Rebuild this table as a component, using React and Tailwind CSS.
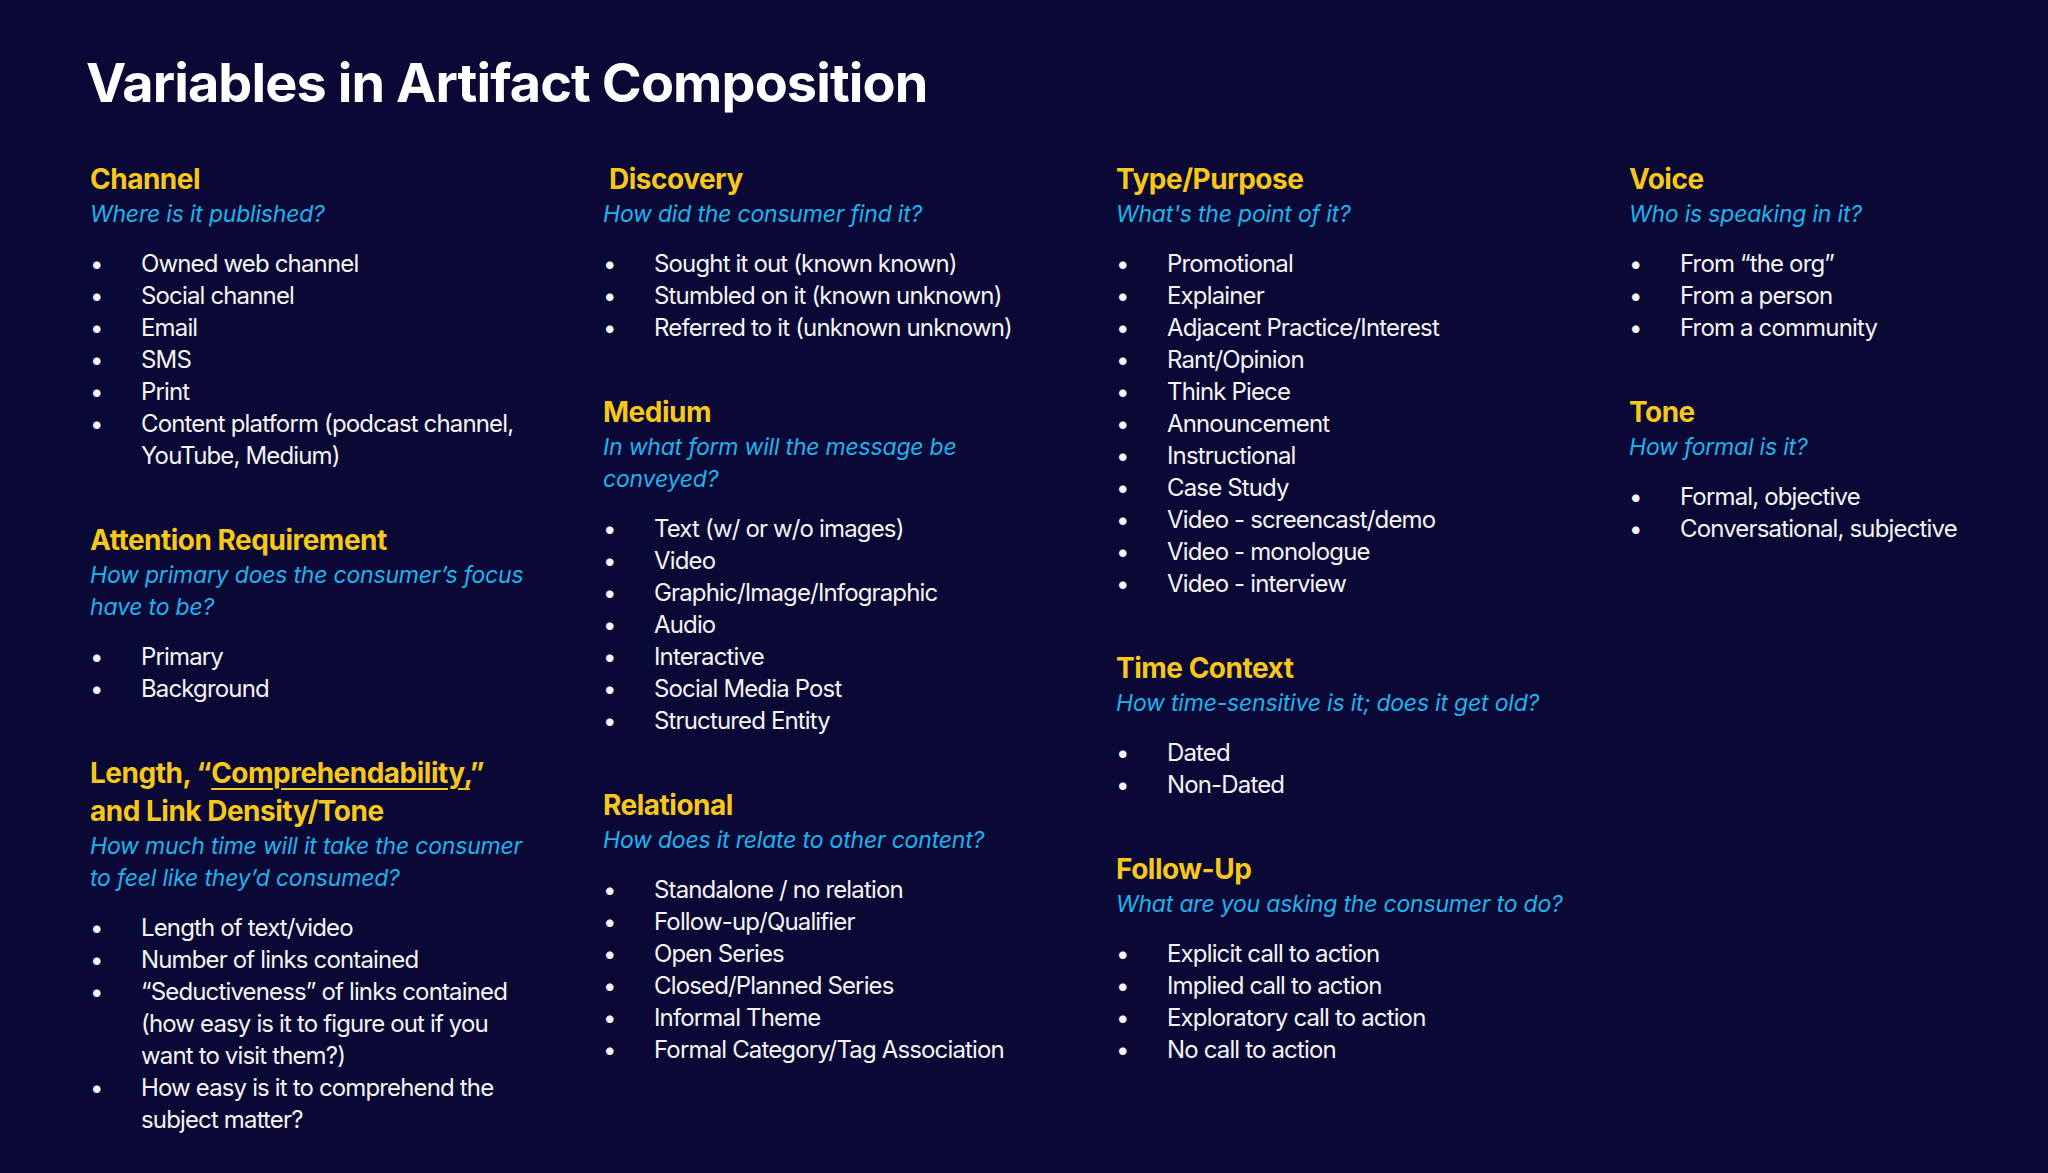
const columns = [
  {
    width: "max-w-[445px]",
    sections: [
      {
        title: "Channel",
        question: "Where is it published?",
        items: [
          "Owned web channel",
          "Social channel",
          "Email",
          "SMS",
          "Print",
          "Content platform (podcast channel, YouTube, Medium)",
        ],
      },
      {
        title: "Attention Requirement",
        question: "How primary does the consumer’s focus have to be?",
        items: ["Primary", "Background"],
      },
      {
        title: (
          <>
            Length, “
            <span className="underline decoration-[#f7c71c] decoration-2 underline-offset-[5px]">
              Comprehendability,
            </span>
            ”<br />
            and Link Density/Tone
          </>
        ),
        question: "How much time will it take the consumer to feel like they’d consumed?",
        items: [
          "Length of text/video",
          "Number of links contained",
          "“Seductiveness” of links contained (how easy is it to figure out if you want to visit them?)",
          "How easy is it to comprehend the subject matter?",
        ],
      },
    ],
  },
  {
    width: "max-w-[445px]",
    sections: [
      {
        title: "Discovery",
        indent: true,
        question: "How did the consumer find it?",
        items: [
          "Sought it out (known known)",
          "Stumbled on it (known unknown)",
          "Referred to it (unknown unknown)",
        ],
      },
      {
        title: "Medium",
        question: "In what form will the message be conveyed?",
        items: [
          "Text (w/ or w/o images)",
          "Video",
          "Graphic/Image/Infographic",
          "Audio",
          "Interactive",
          "Social Media Post",
          "Structured Entity",
        ],
      },
      {
        title: "Relational",
        question: "How does it relate to other content?",
        items: [
          "Standalone / no relation",
          "Follow-up/Qualifier",
          "Open Series",
          "Closed/Planned Series",
          "Informal Theme",
          "Formal Category/Tag Association",
        ],
      },
    ],
  },
  {
    width: "max-w-[490px]",
    sections: [
      {
        title: "Type/Purpose",
        question: "What's the point of it?",
        items: [
          "Promotional",
          "Explainer",
          "Adjacent Practice/Interest",
          "Rant/Opinion",
          "Think Piece",
          "Announcement",
          "Instructional",
          "Case Study",
          "Video - screencast/demo",
          "Video - monologue",
          "Video - interview",
        ],
      },
      {
        title: "Time Context",
        question: "How time-sensitive is it; does it get old?",
        items: ["Dated", "Non-Dated"],
      },
      {
        title: "Follow-Up",
        question: "What are you asking the consumer to do?",
        items: [
          "Explicit call to action",
          "Implied call to action",
          "Exploratory call to action",
          "No call to action",
        ],
      },
    ],
  },
  {
    width: "max-w-[380px]",
    sections: [
      {
        title: "Voice",
        question: "Who is speaking in it?",
        items: ["From “the org”", "From a person", "From a community"],
      },
      {
        title: "Tone",
        question: "How formal is it?",
        items: ["Formal, objective", "Conversational, subjective"],
      },
    ],
  },
];

function Section({ section, first }) {
  return (
    <div className={first ? "" : "mt-[49px]"}>
      <h2
        className={`text-[28px] leading-[38px] font-bold text-[#f7c71c] tracking-[-0.5px] ${
          section.indent ? "pl-[6px]" : ""
        }`}
      >
        {section.title}
      </h2>
      <p className="text-[23px] leading-[32px] italic text-[#1db4ef] tracking-[-0.2px]">
        {section.question}
      </p>
      <ul className="mt-[18px]">
        {section.items.map((item) => (
          <li key={item} className="flex text-[24px] leading-[32px] text-[#f4f4f6] tracking-[-0.85px]">
            <span className="w-[51px] shrink-0">•</span>
            <span>{item}</span>
          </li>
        ))}
      </ul>
    </div>
  );
}

export default function App() {
  return (
    <div
      className="min-h-[1173px] w-full overflow-hidden bg-[#0a0834] px-[86px]"
      style={{ fontFamily: "Inter, 'Noto Sans', sans-serif" }}
    >
      <h1 className="pt-[56px] text-[54px] leading-[54px] font-bold text-white tracking-[-0.9px]">
        Variables in Artifact Composition
      </h1>
      <div className="mt-[50px] ml-[4px] grid grid-cols-[513px_513px_513px_1fr]">
        {columns.map((col, i) => (
          <div key={i} className={col.width}>
            {col.sections.map((section, j) => (
              <Section key={j} section={section} first={j === 0} />
            ))}
          </div>
        ))}
      </div>
    </div>
  );
}
